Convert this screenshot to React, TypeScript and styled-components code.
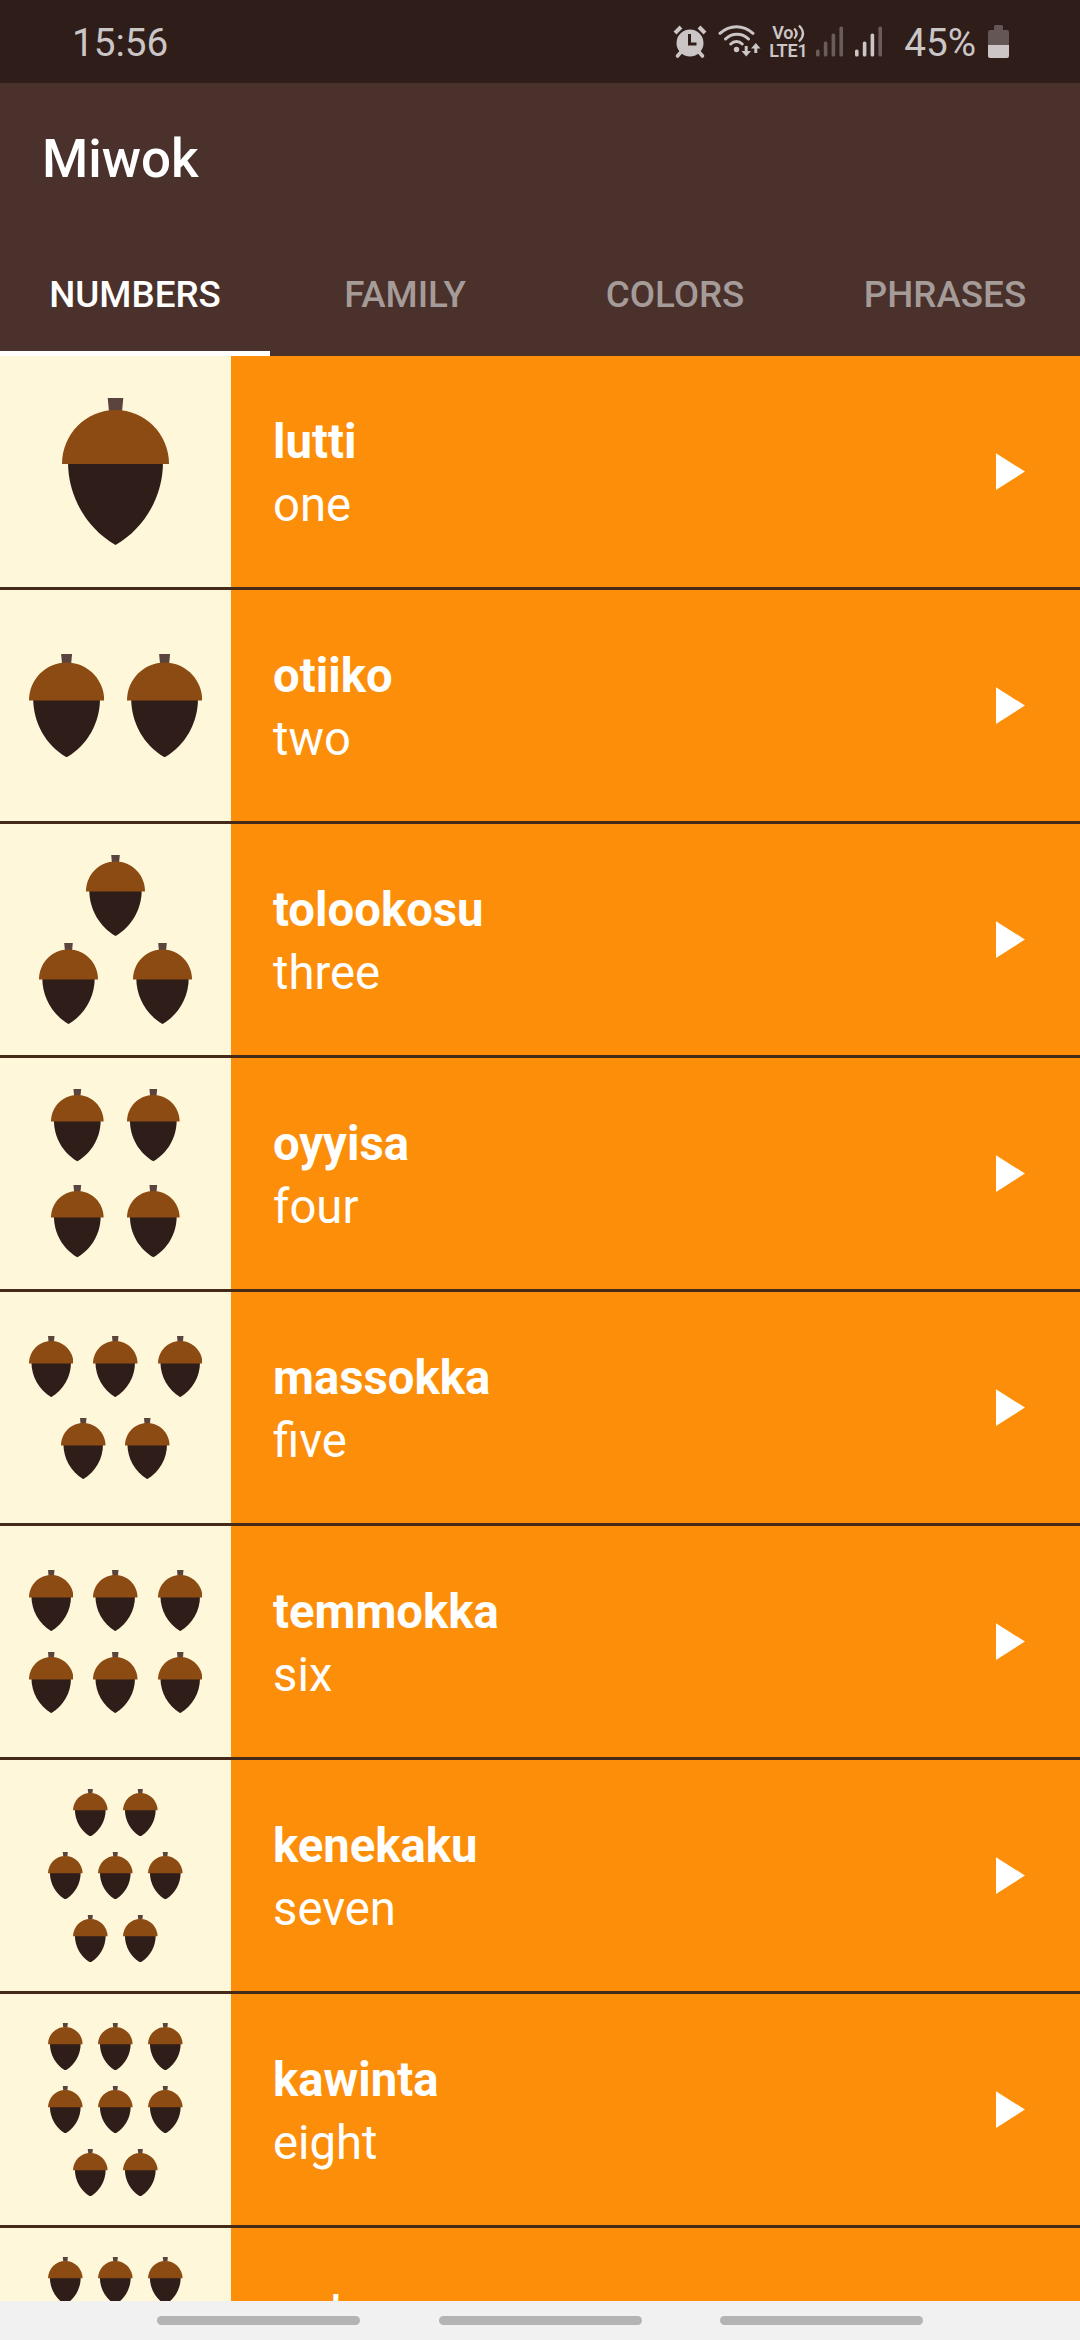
import React from 'react';
import styled, { createGlobalStyle } from 'styled-components';

const GlobalStyle = createGlobalStyle`
  *, *::before, *::after { box-sizing: border-box; }
  html, body { margin: 0; padding: 0; background: #fff7da; }
  body { font-family: Roboto, "Noto Sans", sans-serif; }
`;

const Screen = styled.div`
  width: 1080px;
  height: 2340px;
  display: flex;
  flex-direction: column;
  overflow: hidden;
`;

const StatusBar = styled.header`
  flex: none;
  height: 83px;
  padding: 0 71px 0 72px;
  display: flex;
  align-items: center;
  justify-content: space-between;
  background: #2f1d1a;
  color: #cbc6c5;
`;

const StatusText = styled.span`
  font-size: 38.7px;
  line-height: 46px;
  padding-top: 2px;
`;

const StatusIcons = styled.div`
  display: flex;
  align-items: center;
`;

const Glyph = styled.svg<{ $gap: number }>`
  display: block;
  flex: none;
  margin-right: ${(p) => p.$gap}px;
`;

const Network = styled.div`
  width: 39px;
  margin-right: 8px;
  display: flex;
  flex-direction: column;
  font-size: 18px;
  font-weight: 600;
  letter-spacing: -0.2px;
  line-height: 18px;
  white-space: nowrap;
`;

const NetworkTop = styled.span`
  display: flex;
  align-items: center;
  height: 18px;
  padding-left: 3px;
`;

const Waves = styled.svg`
  display: block;
  flex: none;
  overflow: visible;
`;

const AppBar = styled.div`
  flex: none;
  height: 147px;
  padding: 4px 42px 0;
  display: flex;
  align-items: center;
  background: #4a312b;
`;

const Title = styled.h1`
  margin: 0;
  font-size: 52.9px;
  font-weight: 500;
  line-height: 62px;
  color: #ffffff;
`;

const Tabs = styled.nav`
  flex: none;
  height: 126px;
  display: grid;
  grid-template-columns: repeat(4, 1fr);
  background: #4a312b;
`;

const Tab = styled.div<{ $active: boolean }>`
  display: flex;
  align-items: center;
  justify-content: center;
  padding-top: 7px;
  border-bottom: 5px solid ${(p) => (p.$active ? '#ffffff' : 'transparent')};
  font-size: 36.75px;
  font-weight: 500;
  color: ${(p) => (p.$active ? '#ffffff' : '#a59b98')};
`;

const List = styled.main`
  flex: 1;
  min-height: 0;
  overflow: hidden;
`;

const Row = styled.div`
  height: 234px;
  display: flex;
  background: #fd8e09;
  border-bottom: 3px solid #452a19;
`;

const Thumb = styled.div<{ $gap: number }>`
  flex: none;
  width: 231px;
  display: flex;
  flex-direction: column;
  align-items: center;
  justify-content: center;
  gap: ${(p) => p.$gap}px;
  background: #fff7da;
`;

const AcornRow = styled.div<{ $gap: number }>`
  display: flex;
  gap: ${(p) => p.$gap}px;
`;

const AcornSvg = styled.svg`
  display: block;
  flex: none;
`;

const Words = styled.div`
  flex: 1;
  padding: 5px 0 0 42px;
  display: flex;
  flex-direction: column;
  justify-content: center;
`;

const Word = styled.span<{ $bold?: boolean }>`
  font-size: 47.25px;
  line-height: 63px;
  font-weight: ${(p) => (p.$bold ? 700 : 400)};
  color: #ffffff;
`;

const PlayBox = styled.div`
  flex: none;
  padding-right: 42px;
  display: flex;
  align-items: center;
`;

const NavBar = styled.footer`
  flex: none;
  height: 39px;
  padding: 15px 157px 0;
  display: flex;
  justify-content: space-between;
  background: #f1f1f1;
`;

const Pill = styled.div`
  width: 203px;
  height: 9px;
  border-radius: 5px;
  background: #b4b4b4;
`;

const Acorn = ({ width }: { width: number }) => (
  <AcornSvg width={width} height={(width * 147) / 107} viewBox="0 0 107 147">
    <path d="M6 64C6 98 24 130 53.500 147C83 130 101 98 101 64Z" fill="#2f1d1a" />
    <path d="M45.700 0H61.300L60 14H47Z" fill="#5a443d" />
    <path d="M0 66C0 36 24 12 53.500 12S107 36 107 66Z" fill="#8b4b12" />
  </AcornSvg>
);

type Entry = {
  miwok: string;
  english: string;
  rows: number[];
  size: number;
  colGap: number;
  rowGap: number;
};

const entries: Entry[] = [
  { miwok: 'lutti', english: 'one', rows: [1], size: 107, colGap: 0, rowGap: 0 },
  { miwok: 'otiiko', english: 'two', rows: [2], size: 75.2, colGap: 22.8, rowGap: 0 },
  { miwok: 'tolookosu', english: 'three', rows: [1, 2], size: 59, colGap: 34.6, rowGap: 6 },
  { miwok: 'oyyisa', english: 'four', rows: [2, 2], size: 52.6, colGap: 23.4, rowGap: 23.7 },
  { miwok: 'massokka', english: 'five', rows: [3, 2], size: 44.5, colGap: 19.9, rowGap: 20.6 },
  { miwok: 'temmokka', english: 'six', rows: [3, 3], size: 44.5, colGap: 19.9, rowGap: 20.6 },
  { miwok: 'kenekaku', english: 'seven', rows: [2, 3, 2], size: 34.6, colGap: 15.2, rowGap: 15.5 },
  { miwok: 'kawinta', english: 'eight', rows: [3, 3, 2], size: 34.6, colGap: 15.2, rowGap: 15.5 },
  { miwok: "wo'e", english: 'nine', rows: [3, 3, 3], size: 34.6, colGap: 15.2, rowGap: 15.5 },
];

const tabs = ['NUMBERS', 'FAMILY', 'COLORS', 'PHRASES'];

const AlarmIcon = () => (
  <Glyph $gap={11} width="34" height="34" viewBox="0 0 34 34" fill="none" stroke="#cbc6c5">
    <circle cx="17" cy="18" r="13.500" fill="#cbc6c5" stroke="none" />
    <path d="M2 8L8 2M32 8L26 2" strokeWidth="4" />
    <path d="M8 27L4.500 31M26 27L29.500 31" strokeWidth="3.600" strokeLinecap="round" />
    <path d="M16.500 9V19H23.500" stroke="#2f1d1a" strokeWidth="3" />
  </Glyph>
);

const WifiIcon = () => (
  <Glyph $gap={8} width="43" height="34" viewBox="0 0 43 34" fill="none" stroke="#cbc6c5">
    <path
      d="M2 8.300C12 -0.500 25 -0.500 35 8.300M7.500 14C14 7.600 24 7.600 30.500 14M12.800 19C16 15.800 21 15.800 24.200 19"
      strokeWidth="3"
      strokeLinecap="round"
    />
    <circle cx="18.500" cy="24.500" r="2.700" fill="#cbc6c5" stroke="none" />
    <path d="M28.200 21V28M37.800 28V21" strokeWidth="3" />
    <path d="M23.500 26L28.200 31.500L33 26ZM33 23.500L37.800 18L42.500 23.500Z" fill="#cbc6c5" stroke="none" />
  </Glyph>
);

const SignalIcon = ({ level, gap }: { level: number; gap: number }) => (
  <Glyph $gap={gap} width="28" height="31" viewBox="0 0 28 31">
    {[7, 15, 23, 30].map((h, i) => (
      <rect key={h} x={i * 7.8} y={30.5 - h} width="3.600" height={h} rx="1.600" fill={i < level ? '#cbc6c5' : '#6a5c5a'} />
    ))}
  </Glyph>
);

const BatteryIcon = () => (
  <Glyph $gap={0} width="21" height="33" viewBox="0 0 21 33">
    <path d="M6 5V1.500Q6 0 7.500 0H13.500Q15 0 15 1.500V5H19Q21 5 21 7V20H0V7Q0 5 2 5Z" fill="#645654" />
    <path d="M0 20H21V31Q21 33 19 33H2Q0 33 0 31Z" fill="#cbc6c5" />
  </Glyph>
);

const App = () => (
  <>
    <GlobalStyle />
    <Screen>
      <StatusBar>
        <StatusText>15:56</StatusText>
        <StatusIcons>
          <AlarmIcon />
          <WifiIcon />
          <Network>
            <NetworkTop>
              Vo
              <Waves width="12" height="18" viewBox="0 0 12 18" fill="none" stroke="#cbc6c5" strokeWidth="2.200">
                <path d="M1.200 4.500Q6 9.500 1.200 14.500M6 1.500Q14 9.500 6 17.500" />
              </Waves>
            </NetworkTop>
            <span>LTE1</span>
          </Network>
          <SignalIcon level={0} gap={11} />
          <SignalIcon level={3} gap={21} />
          <StatusText>45%</StatusText>
          <Glyph as="span" $gap={12} />
          <BatteryIcon />
        </StatusIcons>
      </StatusBar>
      <AppBar>
        <Title>Miwok</Title>
      </AppBar>
      <Tabs>
        {tabs.map((t, i) => (
          <Tab key={t} $active={i === 0}>{t}</Tab>
        ))}
      </Tabs>
      <List>
        {entries.map((e) => (
          <Row key={e.english}>
            <Thumb $gap={e.rowGap}>
              {e.rows.map((count, r) => (
                <AcornRow key={r} $gap={e.colGap}>
                  {Array.from({ length: count }, (_, i) => (
                    <Acorn key={i} width={e.size} />
                  ))}
                </AcornRow>
              ))}
            </Thumb>
            <Words>
              <Word $bold>{e.miwok}</Word>
              <Word>{e.english}</Word>
            </Words>
            <PlayBox>
              <svg width="63" height="63" viewBox="0 0 24 24" fill="#ffffff">
                <path d="M8 5v14l11-7z" />
              </svg>
            </PlayBox>
          </Row>
        ))}
      </List>
      <NavBar>
        <Pill />
        <Pill />
        <Pill />
      </NavBar>
    </Screen>
  </>
);

export default App;
